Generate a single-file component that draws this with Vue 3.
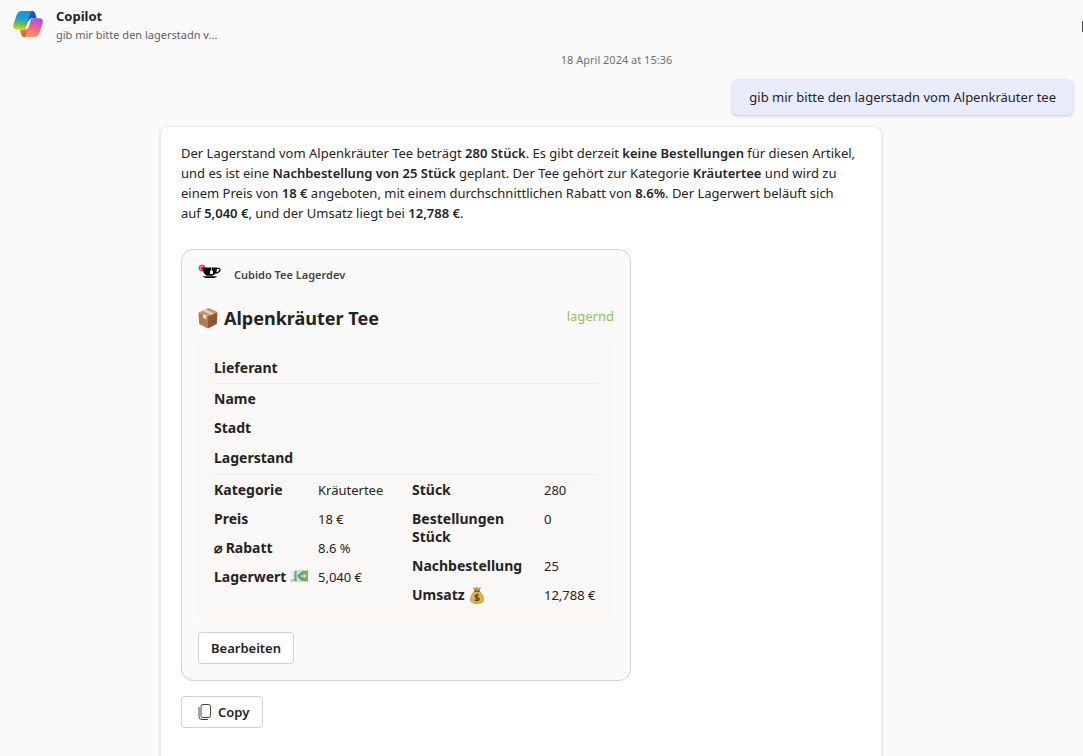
<script setup>
const left = [
  { label: 'Kategorie', value: 'Kräutertee' },
  { label: 'Preis', value: '18 €' },
  { label: '⌀ Rabatt', value: '8.6 %' },
  { label: 'Lagerwert', value: '5,040 €', icon: 'note' },
]
const right = [
  { label: 'Stück', value: '280' },
  { label: 'Bestellungen Stück', value: '0' },
  { label: 'Nachbestellung', value: '25' },
  { label: 'Umsatz', value: '12,788 €', icon: 'bag' },
]
</script>

<template>
  <div class="app">
    <header class="top">
      <svg class="logo" viewBox="0 0 30 28" aria-hidden="true">
        <defs>
          <linearGradient id="lg-a" x1="0.4" y1="0" x2="0.3" y2="1">
            <stop offset="0" stop-color="#1a8fe8" />
            <stop offset="0.35" stop-color="#159fd8" />
            <stop offset="0.65" stop-color="#4cb878" />
            <stop offset="1" stop-color="#f0d000" />
          </linearGradient>
          <linearGradient id="lg-b" x1="0.7" y1="0" x2="0.4" y2="1">
            <stop offset="0" stop-color="#a44cf0" />
            <stop offset="0.45" stop-color="#ee5f90" />
            <stop offset="1" stop-color="#ff9466" />
          </linearGradient>
          <linearGradient id="lg-c" x1="0" y1="0" x2="1" y2="0.6">
            <stop offset="0" stop-color="#1470e0" />
            <stop offset="1" stop-color="#1b45c4" />
          </linearGradient>
          <linearGradient id="lg-d" x1="0" y1="0" x2="0.6" y2="1">
            <stop offset="0" stop-color="#f7a524" />
            <stop offset="1" stop-color="#e24a3c" />
          </linearGradient>
        </defs>
        <path fill="url(#lg-c)" d="M14 1h5.200c1.900 0 2.600 1.100 3.100 2.700l1.300 4.500h-3.500c-2.500 0-3.800 1.200-4.600 3.400L12 10z" />
        <path fill="url(#lg-d)" d="M15.500 27h-4.300c-1.900 0-2.600-1.200-3.100-2.800L6.800 19.500h3c2.500 0 3.800-1 4.600-3.400L18 18z" />
        <path fill="url(#lg-a)" d="M18.500 1H8.600C5.600 1 4.200 3.200 3 6.800 1.700 11 .2 14.500.2 16.600c0 2.100 1.500 2.900 3.600 2.900h5.400c2.500 0 3.600-1.200 4.400-3.600l3.200-11C17.500 2.600 17.500 1.500 18.500 1z" />
        <path fill="url(#lg-b)" d="M11.600 27h9.800c3 0 4.400-2.200 5.600-5.800 1.300-4.200 2.800-7.600 2.800-9.900 0-2.200-1.500-3.100-3.600-3.100h-5.400c-2.500 0-3.600 1.200-4.400 3.600l-3.200 11.200C12.500 25.400 12.400 26.500 11.600 27z" />
        <path fill="#fafafa" d="M20.800 8.200c-2.700 0-4.300.600-5.200 3.400l-1.500 4.800c-.700 2.200-1.900 3.100-4.300 3.100 2.900.2 4.900-.4 5.800-3.100l1.700-5.200c.6-1.900 1.600-2.800 3.500-3z" />
        <path fill="#fafafa" d="M15.800 11.200l2-.5-3 7.600-2.200.4z" />
      </svg>
      <div class="who">
        <h1>Copilot</h1>
        <p>gib mir bitte den lagerstadn v...</p>
      </div>
      <span class="edge" aria-hidden="true"></span>
    </header>

    <main class="chat">
      <time class="date" datetime="2024-04-18T15:36">18 April 2024 at 15:36</time>
      <p class="bubble">gib mir bitte den lagerstadn vom Alpenkräuter tee</p>

      <article class="answer">
        <p class="text">
          Der Lagerstand vom Alpenkräuter Tee beträgt <b>280 Stück</b>. Es gibt derzeit
          <b>keine Bestellungen</b> für diesen Artikel, und es ist eine
          <b>Nachbestellung von 25 Stück</b> geplant. Der Tee gehört zur Kategorie
          <b>Kräutertee</b> und wird zu einem Preis von <b>18 €</b> angeboten, mit einem
          durchschnittlichen Rabatt von <b>8.6%</b>. Der Lagerwert beläuft sich
          auf&nbsp;<b>5,040 €</b>, und der Umsatz liegt bei <b>12,788 €</b>.
        </p>

        <section class="card">
          <div class="source">
            <svg class="cup" viewBox="0 0 24 16" aria-hidden="true">
              <circle cx="4" cy="4" r="3.500" fill="#f9a9be" />
              <circle cx="4" cy="4" r="2.600" fill="none" stroke="#ee2c5c" stroke-width="1.300" />
              <rect x="3" y="3" width="2.500" height="2.500" fill="#e5184c" />
              <path d="M4.500 3.500h14.500v1.200c0 3.600-2 6-4.500 7H9C6.500 10.700 4.500 7.500 4.500 3.500z" fill="#080808" />
              <path d="M18.500 4.300h2.200c2.200 0 2 4.200-3.400 4.800" fill="none" stroke="#080808" stroke-width="1.200" />
              <path d="M4.500 12.200h14.500c-1.500 1.500-3 1.800-4.500 1.800H9.500c-2 0-3.500-.500-5-1.800z" fill="#080808" />
              <path d="M13.500 3.500v3" stroke="#fff" stroke-width="0.700" />
              <path d="M12 7l1.500-1L15 7v3h-3z" fill="#fff" />
            </svg>
            <span>Cubido Tee Lagerdev</span>
          </div>

          <div class="title">
            <svg class="box" viewBox="0 0 20 22" aria-hidden="true">
              <path d="M0.500 5.500 10 9v12.500L1.200 17z" fill="#b37a4c" />
              <path d="M19.500 5 10 9v12.500l8.800-4.500z" fill="#8f5b34" />
              <path d="M.5 5.500 10.500 1l9 4L10 9z" fill="#c9935f" />
              <path d="M4.500 3.700 7.500 2.300 16 6.400 12.800 7.800z" fill="#e6d0b2" />
              <path d="M5 7.200 8.500 8.500v4L7 11.500l-2-.500z" fill="#dde1df" />
              <path d="M14 15.500l2.500-1.200" stroke="#573417" stroke-width="1" />
            </svg>
            <h2>Alpenkräuter Tee</h2>
            <span class="state">lagernd</span>
          </div>

          <div class="panel">
            <h3 class="first">Lieferant</h3>
            <table>
              <tbody>
                <tr><th scope="row">Name</th><td></td></tr>
                <tr><th scope="row">Stadt</th><td></td></tr>
              </tbody>
            </table>
            <h3>Lagerstand</h3>
            <div class="columns">
              <table v-for="(facts, i) in [left, right]" :key="i" :class="i ? 'wide' : 'narrow'">
                <tbody>
                  <tr v-for="f in facts" :key="f.label">
                    <th scope="row">
                      {{ f.label }}
                      <svg v-if="f.icon === 'note'" class="note" viewBox="0 0 18 12" aria-hidden="true">
                        <rect width="18" height="12" fill="#cfdccf" />
                        <path d="M0 0h5l-2 5 2 6H0z" fill="#edf1ea" />
                        <path d="M1 10h4" stroke="#83a18c" />
                        <path d="M5.500 1v10" stroke="#4eb193" stroke-width="2" />
                        <path d="M13 2 8.500 6l4 4" fill="none" stroke="#439d72" stroke-width="2" />
                        <rect x="12" y="1" width="5" height="10" fill="#76a765" />
                        <circle cx="14.500" cy="6" r="1.800" fill="#d7e7b4" />
                        <path d="M17.500 0v12" stroke="#92a6ae" />
                      </svg>
                      <svg v-if="f.icon === 'bag'" class="bag" viewBox="0 0 14 18" aria-hidden="true">
                        <path d="M3 1l2 1 2-1 2 1 2-1-1.500 4.500h-5z" fill="#c29a3d" />
                        <path d="M5 5h4c2.500 2 4.500 5.500 4.500 8.500S11 17.500 7 17.500.500 16.500.500 13.500 2.500 7 5 5z" fill="#dfb348" stroke="#a57c2b" stroke-width="0.600" />
                        <path d="M4.300 5.300h5.400" stroke="#8b4f24" stroke-width="1.300" />
                        <path d="M9 9.500C8 8.300 5 8.500 5 10.200c0 1.900 4.200 1 4.200 2.900 0 1.800-3.300 2-4.400.500M7 7.800v7.400" fill="none" stroke="#4a3b1d" stroke-width="1.100" />
                      </svg>
                    </th>
                    <td>{{ f.value }}</td>
                  </tr>
                </tbody>
              </table>
            </div>
          </div>

          <button type="button" class="btn">Bearbeiten</button>
        </section>

        <button type="button" class="btn copy">
          <svg viewBox="0 0 14 18" aria-hidden="true">
            <rect x="3" y="1.500" width="9.500" height="13" rx="2" />
            <path d="M1 4v9.500a3 3 0 0 0 3 3h6" />
          </svg>
          Copy
        </button>
      </article>
    </main>
  </div>
</template>

<style>
body {
  background: #fafafa;
}
</style>

<style scoped>
.app {
  height: 100vh;
  overflow: hidden;
  display: flex;
  flex-direction: column;
  background: #fafafa;
  color: #242424;
  font: 13px/20px "Noto Sans", "Open Sans", sans-serif;
}
h1, h2, h3, p {
  margin: 0;
}
.top {
  display: flex;
  gap: 13px;
  padding: 6px 0 0 13px;
}
.logo {
  width: 30px;
  height: 28px;
  margin-top: 4px;
}
.who {
  flex: 1;
}
.who h1 {
  font-size: 13px;
  line-height: 20px;
}
.who p {
  font-size: 11px;
  line-height: 18px;
  color: #616161;
}
.edge {
  width: 1px;
  height: 11px;
  margin-top: 15px;
  background: #4a4a4a;
}
.chat {
  flex: 1;
  display: flex;
  flex-direction: column;
  padding: 8px 10px 0 160px;
}
.date {
  align-self: center;
  font-size: 11px;
  line-height: 16px;
  color: #707070;
}
.bubble {
  align-self: flex-end;
  margin-top: 11px;
  padding: 8px 17px;
  border-radius: 6px;
  background: #e8ebfa;
  box-shadow: 0 1px 3px rgba(0, 0, 0, 0.22);
}
.answer {
  flex: 1 0 auto;
  box-sizing: border-box;
  width: 100%;
  max-width: 722px;
  margin-top: 11px;
  padding: 16px 22px 32px 20px;
  border: 1px solid #ececec;
  border-bottom: 0;
  border-radius: 8px 8px 0 0;
  background: #fff;
  box-shadow: 0 1px 3px rgba(0, 0, 0, 0.14);
}
b {
  font-weight: 600;
}
.card {
  box-sizing: border-box;
  max-width: 450px;
  margin-top: 26px;
  padding: 16px;
  border: 1px solid #d1d1d1;
  border-radius: 12px;
  background: #fafafa;
}
.source {
  display: flex;
  align-items: center;
  gap: 12px;
  height: 18px;
  font-size: 11px;
  font-weight: 600;
  color: #424242;
}
.cup {
  width: 24px;
  height: 16px;
  margin-bottom: 6px;
}
.title {
  display: flex;
  align-items: center;
  gap: 6px;
  margin-top: 22px;
}
.box {
  width: 20px;
  height: 22px;
}
h2 {
  flex: 1;
  font-size: 18px;
  line-height: 24px;
}
.state {
  margin-bottom: 4px;
  color: #92c353;
}
.panel {
  margin-top: 14px;
  padding: 15px 16px 11px;
  background: #f9f8f7;
}
h3 {
  padding: 7px 0;
  border-bottom: 1px solid #ececea;
  font-size: 14px;
  line-height: 18px;
}
h3.first {
  padding: 0 0 6px;
}
table {
  border-collapse: collapse;
}
th, td {
  padding: 6px 0 5px;
  font-size: 13px;
  line-height: 18px;
  text-align: left;
  vertical-align: top;
  font-weight: 400;
}
th {
  font-size: 14px;
  font-weight: 700;
}
.columns {
  display: flex;
  align-items: flex-start;
}
.narrow th {
  width: 104px;
}
.narrow td {
  width: 94px;
}
.wide th {
  width: 132px;
}
.wide td {
  white-space: nowrap;
}
.note {
  width: 18px;
  height: 12px;
}
.bag {
  width: 14px;
  height: 18px;
  vertical-align: -4px;
  margin: -4px 0 0 2px;
}
.btn {
  display: block;
  height: 32px;
  margin-top: 12px;
  padding: 0 12px;
  border: 1px solid #d1d1d1;
  border-radius: 4px;
  background: #fff;
  color: #242424;
  font: 600 13px/20px "Noto Sans", "Open Sans", sans-serif;
}
.copy {
  display: flex;
  align-items: center;
  gap: 6px;
  margin-top: 15px;
  padding: 0 13px 0 16px;
}
.copy svg {
  width: 14px;
  height: 18px;
  fill: none;
  stroke: #424242;
}
</style>
